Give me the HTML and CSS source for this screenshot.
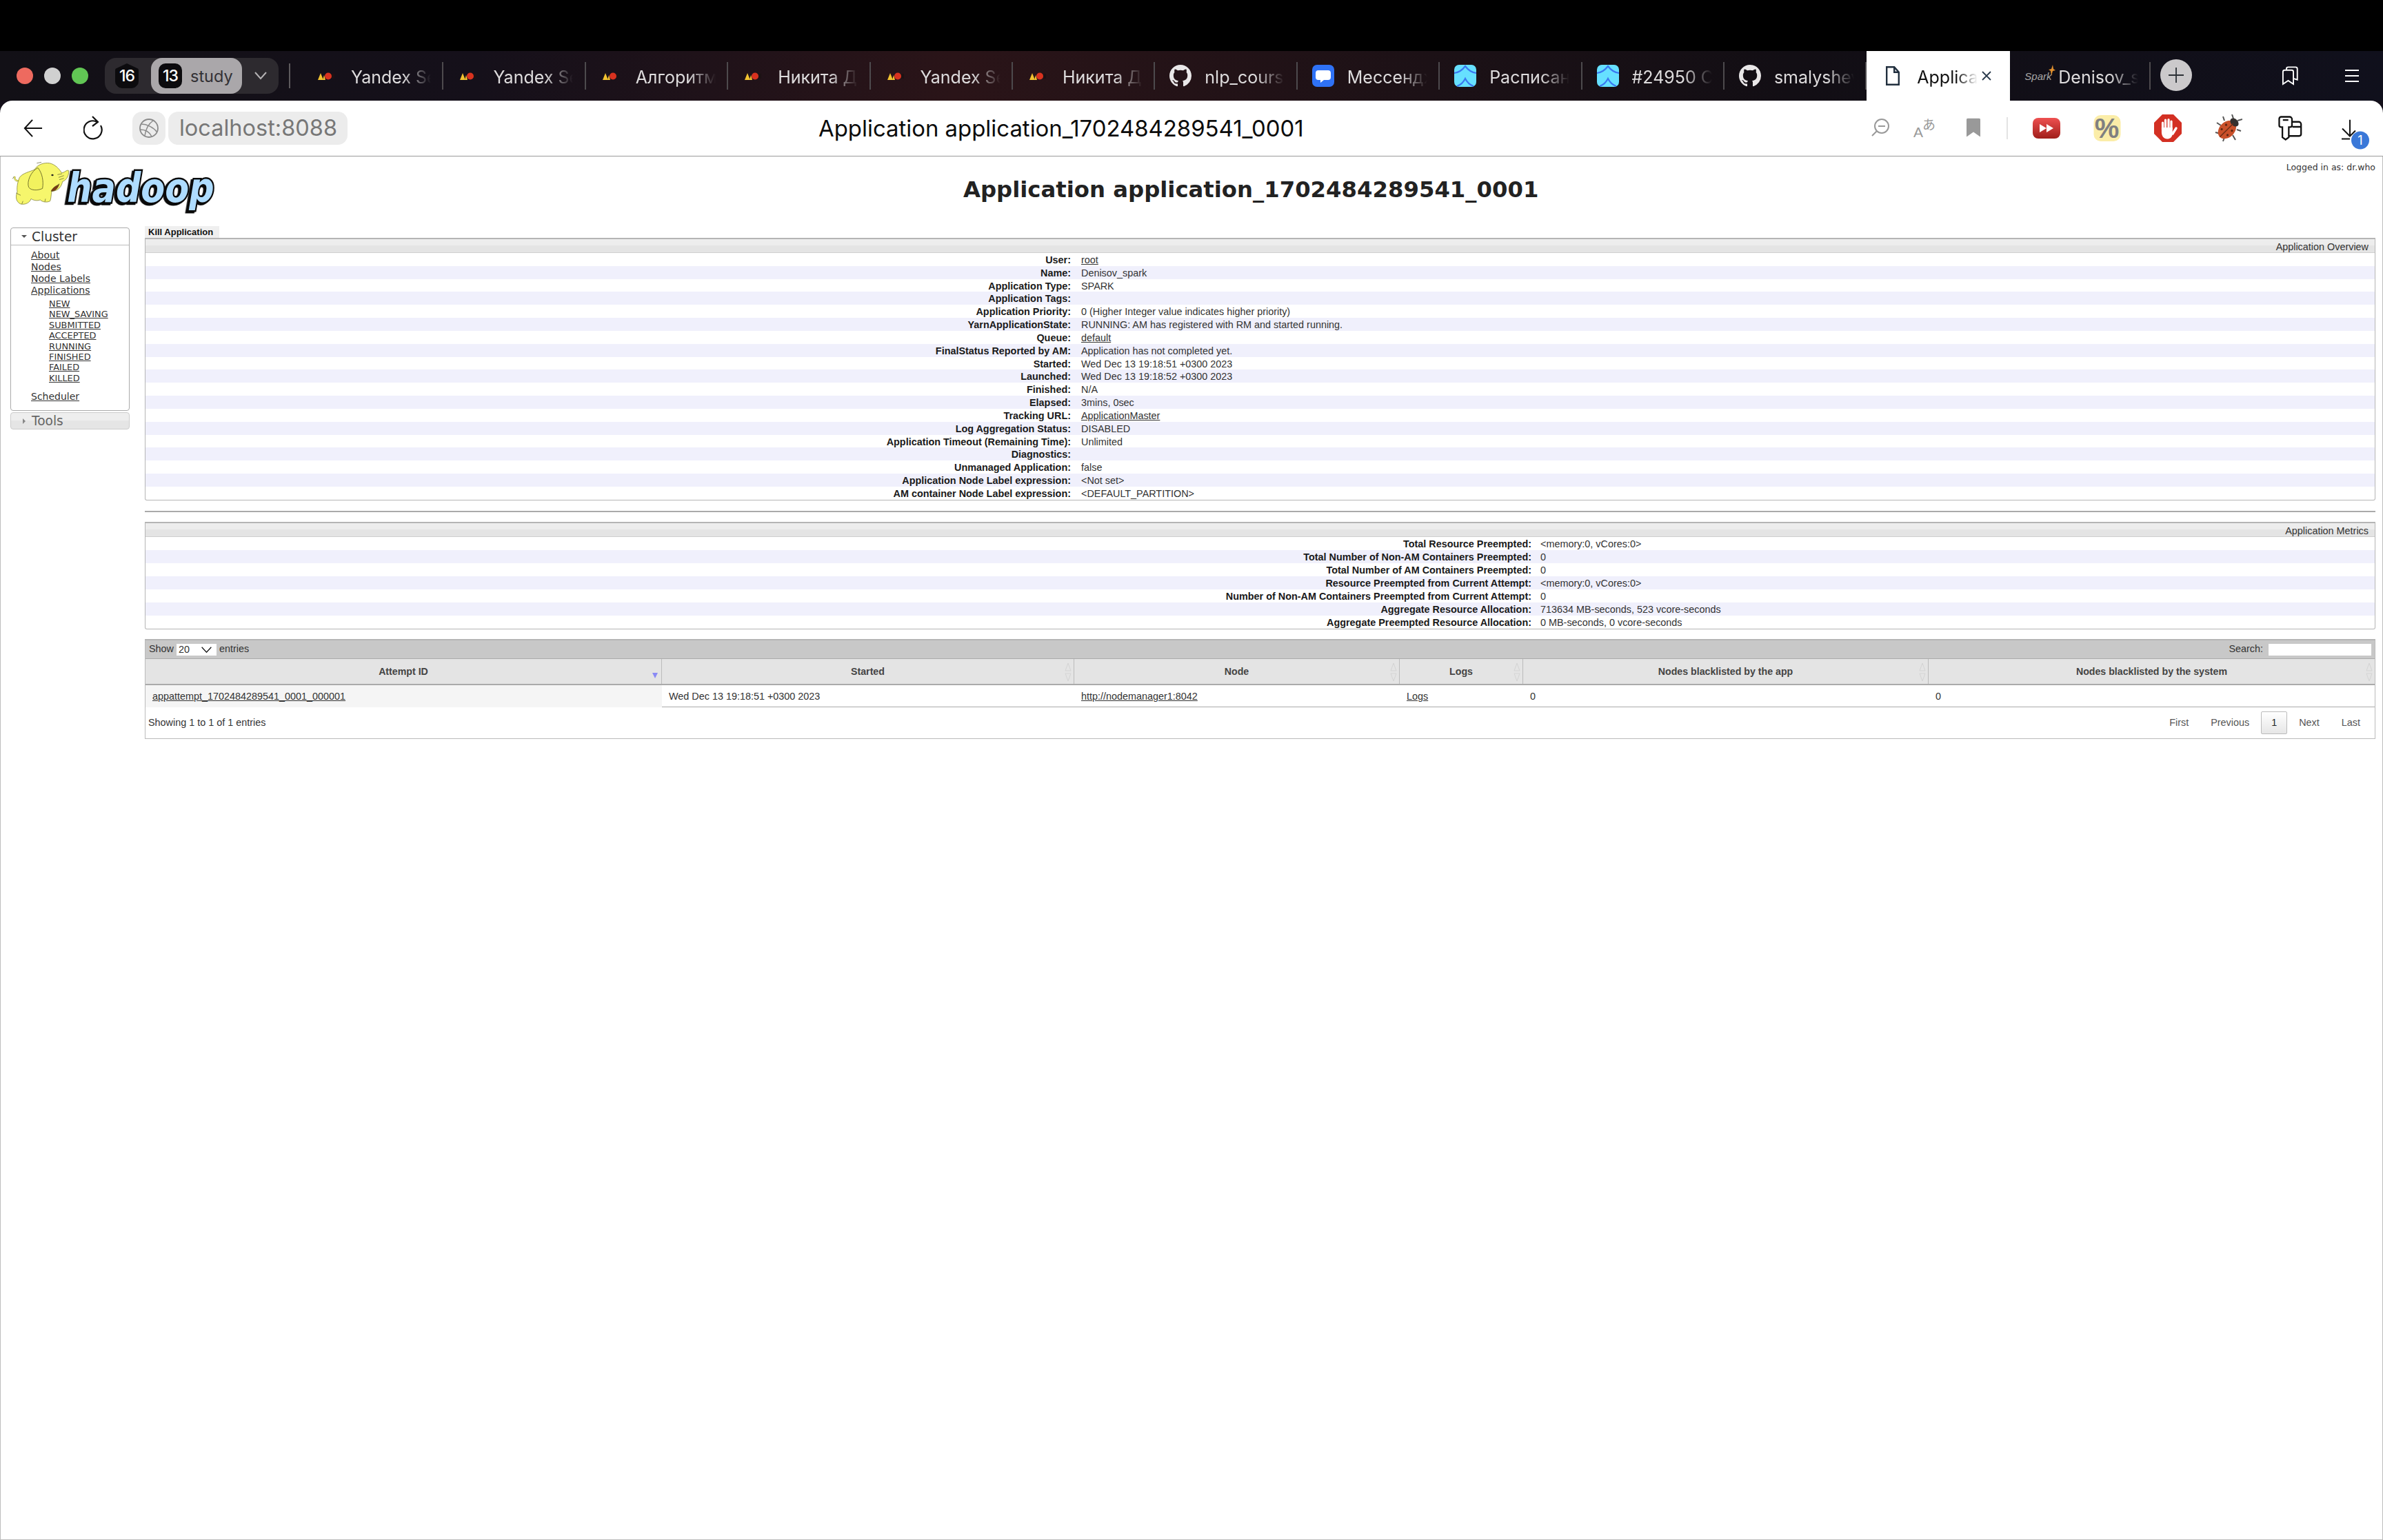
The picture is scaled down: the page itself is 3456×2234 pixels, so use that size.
FILE: index.html
```html
<!DOCTYPE html>
<html lang="en">
<head>
<meta charset="utf-8">
<title>Application application_1702484289541_0001</title>
<link rel="stylesheet" href="styles.css">
</head>
<body>
<svg class="defs" width="0" height="0" aria-hidden="true">
  <defs>
    <symbol id="ya" viewBox="0 0 26 11">
      <path d="M1 11 L5 1 L9 11Z" fill="#f2c230"/>
      <path d="M8 11 L10 4 L12 11Z" fill="#f2c230"/>
      <circle cx="16" cy="5.500" r="5" fill="#d8321f"/>
      <rect x="21" y="2" width="4" height="7" fill="#1c1214"/>
    </symbol>
    <symbol id="gh" viewBox="0 0 16 16">
      <path fill="#e9e7e8" d="M8 0C3.58 0 0 3.58 0 8c0 3.54 2.29 6.53 5.47 7.59.4.07.55-.17.55-.38 0-.19-.01-.82-.01-1.49-2.01.37-2.53-.49-2.69-.94-.09-.23-.48-.94-.82-1.13-.28-.15-.68-.52-.01-.53.63-.01 1.08.58 1.23.82.72 1.21 1.87.87 2.33.66.07-.52.28-.87.51-1.07-1.78-.2-3.64-.89-3.64-3.95 0-.87.31-1.59.82-2.15-.08-.2-.36-1.02.08-2.12 0 0 .67-.21 2.2.82.64-.18 1.32-.27 2-.27s1.36.09 2 .27c1.53-1.04 2.2-.82 2.2-.82.44 1.1.16 1.92.08 2.12.51.56.82 1.27.82 2.15 0 3.07-1.87 3.75-3.65 3.95.29.25.54.73.54 1.48 0 1.07-.01 1.93-.01 2.2 0 .21.15.46.55.38A8.01 8.01 0 0 0 16 8c0-4.42-3.58-8-8-8z"/>
    </symbol>
    <symbol id="trk" viewBox="0 0 32 32">
      <rect width="32" height="32" rx="7" fill="#66e0ff"/>
      <path d="M0 12 C8 11 13 6 16 2 C19 6 24 11 32 12" fill="none" stroke="#3a78f0" stroke-width="2.200"/>
      <path d="M4 31 C10 29 14 24 16 20 C18 24 22 29 28 31" fill="none" stroke="#3a78f0" stroke-width="2.200"/>
    </symbol>
    <symbol id="sort" viewBox="0 0 10 28">
      <path d="M5 1 L9 12 H1Z M5 27 L9 16 H1Z" fill="none" stroke="#d4d4d4" stroke-width="1"/>
    </symbol>
  </defs>
</svg>

<div class="topbar"></div>

<header class="tabbar">
  <div class="lights">
    <span class="light light-red"></span>
    <span class="light light-gray"></span>
    <span class="light light-green"></span>
  </div>
  <div class="group">
    <span class="badge badge-hex">16</span>
    <span class="study"><span class="badge">13</span><span class="study-name">study</span></span>
    <svg class="chev" viewBox="0 0 18 12"><path d="M1 1 L9 10 L17 1" fill="none" stroke="#b5b3b5" stroke-width="2"/></svg>
  </div>
  <span class="first-sep"></span>
  <div class="tabs">
    <div class="tab"><span class="fav"><svg class="ya"><use href="#ya"/></svg></span><span class="tab-text">Yandex Search</span></div>
    <div class="tab"><span class="fav"><svg class="ya"><use href="#ya"/></svg></span><span class="tab-text">Yandex Search</span></div>
    <div class="tab"><span class="fav"><svg class="ya"><use href="#ya"/></svg></span><span class="tab-text">Алгоритмы</span></div>
    <div class="tab"><span class="fav"><svg class="ya"><use href="#ya"/></svg></span><span class="tab-text">Никита Денисов</span></div>
    <div class="tab"><span class="fav"><svg class="ya"><use href="#ya"/></svg></span><span class="tab-text">Yandex Search</span></div>
    <div class="tab"><span class="fav"><svg class="ya"><use href="#ya"/></svg></span><span class="tab-text">Никита Денисов</span></div>
    <div class="tab"><span class="fav"><svg class="ico32"><use href="#gh"/></svg></span><span class="tab-text">nlp_course</span></div>
    <div class="tab"><span class="fav"><svg class="ico32" viewBox="0 0 32 32"><rect width="32" height="32" rx="7" fill="#2f72f6"/><path d="M9 8h14a4 4 0 0 1 4 4v6a4 4 0 0 1-4 4h-6l-5 4v-4H9a4 4 0 0 1-4-4v-6a4 4 0 0 1 4-4z" fill="#fff"/></svg></span><span class="tab-text">Мессенджер</span></div>
    <div class="tab"><span class="fav"><svg class="ico32"><use href="#trk"/></svg></span><span class="tab-text">Расписание</span></div>
    <div class="tab"><span class="fav"><svg class="ico32"><use href="#trk"/></svg></span><span class="tab-text">#24950 Contest</span></div>
    <div class="tab"><span class="fav"><svg class="ico32"><use href="#gh"/></svg></span><span class="tab-text">smalyshev</span></div>
    <div class="tab tab-active"><span class="fav"><svg class="doc" viewBox="0 0 20 28"><path d="M1.200 1.200h11l6.600 7.500v18.100H1.200z M12.200 1.200v7.500h6.600" fill="none" stroke="#22303f" stroke-width="2.400"/></svg></span><span class="tab-text">Application</span><svg class="tab-x" viewBox="0 0 14 14"><path d="M1 1 L13 13 M13 1 L1 13" stroke="#2a3a4c" stroke-width="1.800"/></svg></div>
    <div class="tab tab-spark"><span class="fav"><span class="spark">Spark<svg class="spark-star" viewBox="0 0 10 16"><path d="M6 0 L7 6 L10 8 L6 9 L4 16 L3 9 L0 7 L4 6Z" fill="#e2912f"/></svg></span></span><span class="tab-text">Denisov_spark</span></div>
  </div>
  <span class="plus"><svg viewBox="0 0 24 24"><path d="M12 1 V23 M1 12 H23" stroke="#2b3036" stroke-width="1.800"/></svg></span>
  <svg class="ic-books" viewBox="322 46 76 88"><path d="M328 128 V72 a8 8 0 0 1 8-8 H368 a8 8 0 0 1 8 8 V128 L352 112z M344 64 V58 a8 8 0 0 1 8-8 H386 a8 8 0 0 1 8 8 V108 L376 102" fill="none" stroke="#fff" stroke-width="6"/></svg>
  <span class="burger"><i></i><i></i><i></i></span>
</header>

<div class="toolbar">
  <svg class="ic-back" viewBox="0 0 30 28"><path d="M29 14 H2 M14 1 L2 14 L14 27" fill="none" stroke="#111" stroke-width="2.200"/></svg>
  <svg class="ic-reload" viewBox="0 0 30 36"><path d="M20 9 A13 13 0 1 0 25 14 M13 1 L21 9 L13 15" fill="none" stroke="#111" stroke-width="2.200"/></svg>
  <span class="globe"><svg viewBox="0 0 30 30"><circle cx="15" cy="15" r="13" fill="none" stroke="#8a8a8a" stroke-width="1.800"/><path d="M4 9 C12 9 22 14 27 21 M2.500 17 C10 17 16 21 19 27 M21 4 C14 9 10 18 9 26" fill="none" stroke="#8a8a8a" stroke-width="1.500"/></svg></span>
  <span class="url">localhost:8088</span>
  <span class="page-title">Application application_1702484289541_0001</span>
  <div class="actions">
    <svg class="act act-zoom" viewBox="0 0 26 26"><circle cx="15" cy="11" r="10" fill="none" stroke="#999" stroke-width="2"/><path d="M10 11 H20 M8 18 L1 25" fill="none" stroke="#999" stroke-width="2"/></svg>
    <span class="act act-tr"><span class="tr-a">A</span><span class="tr-j">あ</span></span>
    <svg class="act act-mark" viewBox="0 0 20 27"><path d="M2 0 H18 a2 2 0 0 1 2 2 V27 L10 20 L0 27 V2 a2 2 0 0 1 2-2z" fill="#999"/></svg>
    <span class="act-sep"></span>
    <svg class="act act-yt" viewBox="0 0 40 30"><defs><linearGradient id="ytg" x1="0" y1="0" x2="0" y2="1"><stop offset="0" stop-color="#ee5050"/><stop offset="1" stop-color="#a01e1a"/></linearGradient></defs><rect width="40" height="30" rx="8" fill="url(#ytg)"/><path d="M10 9 L20 15 L10 21z M20 9 L30 15 L20 21z" fill="#fff"/></svg>
    <span class="act act-pct">%</span>
    <svg class="act act-stop" viewBox="0 0 40 40"><path d="M12 0 H28 L40 12 V28 L28 40 H12 L0 28 V12z" fill="#d33023"/><path d="M12.500 22 V12 M16.500 20 V8 M21 20 V7.500 M25 21 V10" stroke="#fff" stroke-width="3.200" stroke-linecap="round"/><path d="M27 28 L32 20" stroke="#fff" stroke-width="3.400" stroke-linecap="round"/><path d="M10.900 19 H26.700 V27 C27 33 23 35.500 19 35.500 C14 35.500 10.900 31 10.900 26z" fill="#fff"/></svg>
    <svg class="act act-bug" viewBox="0 0 40 40"><g stroke="#555" stroke-width="2" fill="none"><path d="M27 6 L25 0 M33 9 L40 7 M9 16 L3 12 M14 9 L12 3 M32 22 L38 24 M26 30 L30 37 M8 28 L1 26 M14 33 L12 39"/></g><g transform="rotate(45 20 20)"><ellipse cx="20" cy="23" rx="11" ry="15" fill="#c9502a"/><ellipse cx="20" cy="8" rx="7" ry="5" fill="#34302e"/><path d="M20 10 V38" stroke="#6a2c16" stroke-width="1.400"/><circle cx="14" cy="19" r="1.600" fill="#5c2614"/><circle cx="26" cy="19" r="1.600" fill="#5c2614"/><circle cx="14" cy="28" r="1.600" fill="#5c2614"/><circle cx="26" cy="28" r="1.600" fill="#5c2614"/></g></svg>
    <svg class="act act-ext" viewBox="305 262 112 112"><path d="M322 268 H360 a10 10 0 0 1 10 10 V305 a8 8 0 0 1-8 8 H356 V358 L342 368 L328 358 V313 H322 a8 8 0 0 1 -8 -8 V278 a10 10 0 0 1 8 -10z M330 282 H354 M372 290 H400 a10 10 0 0 1 10 10 V344 a8 8 0 0 1 -8 8 H356 M372 312 H410" fill="none" stroke="#111" stroke-width="7"/></svg>
    <span class="act act-dl"><svg viewBox="0 0 24 30"><path d="M12 0 V24 M1 13 L12 24 L20 16 M0 28 H12" fill="none" stroke="#111" stroke-width="2"/></svg><span class="dl-badge">1</span></span>
  </div>
</div>

<main class="page">
  <div class="logged">Logged in as: dr.who</div>
  <div class="head">
    <svg class="logo" viewBox="48 45 900 212" role="img" aria-label="hadoop logo">
      <text class="logo-word" x="292" y="220" textLength="640" lengthAdjust="spacingAndGlyphs">hadoop</text>
      <path d="M85 125 C72 132 60 120 65 108" fill="none" stroke="#8a8a30" stroke-width="7"/>
      <path d="M85 125 C72 132 60 120 65 108" fill="none" stroke="#f4f46a" stroke-width="4"/>
      <path d="M85 112 C100 92 130 88 150 78 C165 55 190 47 215 50 C240 55 258 75 268 92 C280 92 290 78 298 82 C302 100 290 125 272 130 C268 150 255 172 225 172 C222 190 222 205 218 215 C205 222 185 220 175 210 C160 215 145 212 135 205 C130 222 110 232 90 228 C72 220 65 200 75 175 C72 150 78 130 85 112Z" fill="#f6f66c" stroke="#6f6f24" stroke-width="2"/>
      <path d="M165 70 C135 85 115 130 125 155 C135 170 165 170 185 160 C190 130 185 95 165 70Z" fill="#f2f25e" stroke="#5c5c22" stroke-width="2.500"/>
      <path d="M222 172 C232 152 245 150 258 140 C250 165 238 172 222 172Z" fill="#7a3a14" stroke="#3a3a18" stroke-width="1.500"/>
      <ellipse cx="228" cy="102" rx="5" ry="3.500" fill="#222"/>
      <path d="M250 100 L270 96 M255 112 L278 104 M258 122 L278 116 M160 50 L180 46 M54 118 L62 108 M70 180 L90 190 M95 228 L100 215 M195 218 L198 205" fill="none" stroke="#55552a" stroke-width="2"/>
    </svg>
    <h1 class="h1">Application application_1702484289541_0001</h1>
  </div>
  <div class="columns">
    <nav class="nav">
      <div class="acc">
        <div class="acc-title"><span class="caret-down"></span>Cluster</div>
        <div class="acc-body">
          <a href="#">About</a>
          <a href="#">Nodes</a>
          <a href="#">Node Labels</a>
          <a href="#">Applications</a>
          <div class="sub">
            <a href="#">NEW</a>
            <a href="#">NEW_SAVING</a>
            <a href="#">SUBMITTED</a>
            <a href="#">ACCEPTED</a>
            <a href="#">RUNNING</a>
            <a href="#">FINISHED</a>
            <a href="#">FAILED</a>
            <a href="#">KILLED</a>
          </div>
          <a href="#" class="sched">Scheduler</a>
        </div>
      </div>
      <div class="acc-closed"><span class="caret-right"></span>Tools</div>
    </nav>
    <section class="content">
      <div class="kill">Kill Application</div>
      <div class="info info-overview">
        <div class="info-head">Application Overview</div>
        <div class="row"><b>User:</b><span><a href="#">root</a></span></div>
        <div class="row"><b>Name:</b><span>Denisov_spark</span></div>
        <div class="row"><b>Application Type:</b><span>SPARK</span></div>
        <div class="row"><b>Application Tags:</b><span></span></div>
        <div class="row"><b>Application Priority:</b><span>0 (Higher Integer value indicates higher priority)</span></div>
        <div class="row"><b>YarnApplicationState:</b><span>RUNNING: AM has registered with RM and started running.</span></div>
        <div class="row"><b>Queue:</b><span><a href="#">default</a></span></div>
        <div class="row"><b>FinalStatus Reported by AM:</b><span>Application has not completed yet.</span></div>
        <div class="row"><b>Started:</b><span>Wed Dec 13 19:18:51 +0300 2023</span></div>
        <div class="row"><b>Launched:</b><span>Wed Dec 13 19:18:52 +0300 2023</span></div>
        <div class="row"><b>Finished:</b><span>N/A</span></div>
        <div class="row"><b>Elapsed:</b><span>3mins, 0sec</span></div>
        <div class="row"><b>Tracking URL:</b><span><a href="#">ApplicationMaster</a></span></div>
        <div class="row"><b>Log Aggregation Status:</b><span>DISABLED</span></div>
        <div class="row"><b>Application Timeout (Remaining Time):</b><span>Unlimited</span></div>
        <div class="row"><b>Diagnostics:</b><span></span></div>
        <div class="row"><b>Unmanaged Application:</b><span>false</span></div>
        <div class="row"><b>Application Node Label expression:</b><span>&lt;Not set&gt;</span></div>
        <div class="row"><b>AM container Node Label expression:</b><span>&lt;DEFAULT_PARTITION&gt;</span></div>
      </div>
      <hr class="rule">
      <div class="info info-metrics">
        <div class="info-head">Application Metrics</div>
        <div class="row"><b>Total Resource Preempted:</b><span>&lt;memory:0, vCores:0&gt;</span></div>
        <div class="row"><b>Total Number of Non-AM Containers Preempted:</b><span>0</span></div>
        <div class="row"><b>Total Number of AM Containers Preempted:</b><span>0</span></div>
        <div class="row"><b>Resource Preempted from Current Attempt:</b><span>&lt;memory:0, vCores:0&gt;</span></div>
        <div class="row"><b>Number of Non-AM Containers Preempted from Current Attempt:</b><span>0</span></div>
        <div class="row"><b>Aggregate Resource Allocation:</b><span>713634 MB-seconds, 523 vcore-seconds</span></div>
        <div class="row"><b>Aggregate Preempted Resource Allocation:</b><span>0 MB-seconds, 0 vcore-seconds</span></div>
      </div>
      <div class="dt">
        <div class="dt-tools">
          <span class="dt-len">Show <span class="sel">20<svg viewBox="0 0 24 14"><path d="M1 1 L12 13 L23 1" fill="none" stroke="#111" stroke-width="2"/></svg></span> entries</span>
          <span class="dt-search">Search:<span class="search-box"></span></span>
        </div>
        <div class="dt-grid dt-header">
          <div class="th">Attempt ID<span class="sort-on"></span></div>
          <div class="th">Started<svg class="sort"><use href="#sort"/></svg></div>
          <div class="th">Node<svg class="sort"><use href="#sort"/></svg></div>
          <div class="th">Logs<svg class="sort"><use href="#sort"/></svg></div>
          <div class="th">Nodes blacklisted by the app<svg class="sort"><use href="#sort"/></svg></div>
          <div class="th">Nodes blacklisted by the system<svg class="sort"><use href="#sort"/></svg></div>
        </div>
        <div class="dt-grid dt-body">
          <div class="td td-sorted"><a href="#">appattempt_1702484289541_0001_000001</a></div>
          <div class="td">Wed Dec 13 19:18:51 +0300 2023</div>
          <div class="td"><a href="#">http://nodemanager1:8042</a></div>
          <div class="td"><a href="#">Logs</a></div>
          <div class="td">0</div>
          <div class="td">0</div>
        </div>
        <div class="dt-foot">
          <span>Showing 1 to 1 of 1 entries</span>
          <span class="pager"><span>First</span><span>Previous</span><span class="page-cur">1</span><span>Next</span><span>Last</span></span>
        </div>
      </div>
    </section>
  </div>
</main>
</body>
</html>
```
FILE: styles.css
```css
* { box-sizing: border-box; }
html, body { margin: 0; padding: 0; }
body { width: 3456px; height: 2234px; overflow: hidden; background: #14101a; font-family: "Liberation Sans", Arial, sans-serif; color: #111; display: flex; flex-direction: column; }
.defs { position: absolute; }
.topbar { height: 74px; background: #000; flex: none; }

.tabbar { height: 72px; flex: none; display: flex; align-items: center; position: relative; background: linear-gradient(90deg, #121016 0%, #15101a 20%, #2a1418 40%, #1c1116 60%, #120e14 75%, #10101c 100%); color: #e8e6e7; font-family: "Inter", "Noto Sans", sans-serif; }
.lights { display: flex; gap: 16px; margin-left: 24px; width: 128px; flex: none; }
.light { width: 24px; height: 24px; border-radius: 50%; }
.light-red { background: #ee6a5f; }
.light-gray { background: #d0d0d0; }
.light-green { background: #61c554; }
.group { width: 252px; height: 52px; flex: none; background: #2d2a2f; border-radius: 16px; display: flex; align-items: center; padding-left: 15px; color: #fff; }
.badge { width: 34px; height: 36px; background: #0c0b0e; border-radius: 10px; display: flex; align-items: center; justify-content: center; font-size: 23px; font-weight: 500; color: #fff; flex: none; letter-spacing: -1px; }
.badge-hex { clip-path: polygon(50% 0, 100% 22%, 100% 82%, 82% 100%, 18% 100%, 0 82%, 0 22%); }
.study { margin-left: 18px; width: 132px; height: 52px; background: #aaa7aa; border-radius: 16px; display: flex; align-items: center; padding-left: 11px; }
.study-name { margin-left: 12px; color: #333135; font-size: 23.500px; }
.chev { width: 18px; height: 12px; margin-left: 18px; }
.first-sep { width: 2px; height: 36px; background: #5d5a5d; margin-left: 15px; flex: none; }
.tabs { display: flex; margin-left: 16px; height: 72px; flex: none; }
.tab { width: 206.400px; height: 72px; flex: none; display: flex; align-items: center; position: relative; padding-left: 20px; overflow: hidden; }
.tab::after { content: ""; position: absolute; right: 0; top: 16px; height: 40px; width: 2px; background: #4d4a4d; }
.tab-active::after { display: none; }
.tab-active { background: #fff; color: #111; width: 208px; padding-left: 28px; }
.tab-spark { width: 204px; }
.fav { width: 52px; flex: none; display: flex; align-items: center; }
.ya { width: 26px; height: 11px; margin-left: 3px; }
.ico32 { width: 32px; height: 32px; margin-left: 1px; }
.doc { width: 20px; height: 28px; }
.tab-text { font-size: 25px; line-height: 32px; margin-top: 4px; white-space: nowrap; width: 116px; overflow: hidden; color: #dedcdd; -webkit-mask-image: linear-gradient(90deg, #000 65%, transparent 100%); mask-image: linear-gradient(90deg, #000 65%, transparent 100%); }
.tab-active .fav { width: 45px; }
.tab-active .tab-text { color: #111; width: 88px; }
.tab-x { width: 14px; height: 14px; flex: none; margin-left: 6px; }
.spark { position: relative; font-family: "Liberation Sans", sans-serif; font-size: 15px; color: #a8a6a6; font-style: italic; margin-left: 1px; }
.spark-star { position: absolute; width: 10px; height: 18px; right: -6px; top: -9px; }
.tab-spark .fav { width: 50px; }
.plus { width: 46px; height: 46px; border-radius: 50%; background: #cbc9cb; margin-left: 14px; margin-top: -2px; flex: none; display: flex; align-items: center; justify-content: center; }
.plus svg { width: 24px; height: 24px; }
.ic-books { width: 24px; height: 28px; margin-left: 130px; flex: none; }
.burger { margin-left: 68px; width: 20px; display: flex; flex-direction: column; gap: 6px; flex: none; }
.burger i { display: block; height: 2px; background: #fff; }

.toolbar { height: 81px; flex: none; display: flex; align-items: center; position: relative; background: #fff; border-bottom: 1px solid #9a9a9a; border-radius: 18px 18px 0 0; }
.ic-back { width: 28px; height: 28px; margin-left: 34px; flex: none; }
.ic-reload { width: 30px; height: 36px; margin-left: 59px; flex: none; }
.globe { width: 48px; height: 48px; margin-left: 41px; background: #ececec; border-radius: 14px; display: flex; align-items: center; justify-content: center; flex: none; }
.globe svg { width: 30px; height: 30px; }
.url { margin-left: 4px; width: 260px; height: 48px; background: #ececec; border-radius: 14px; color: #777; font-size: 32.500px; font-family: "Inter", sans-serif; line-height: 48px; padding-left: 16px; flex: none; white-space: nowrap; }
.page-title { margin-left: 683px; font-family: "Inter", sans-serif; font-size: 32.900px; color: #0c0c0c; white-space: nowrap; flex: none; }
.actions { position: absolute; inset: 0; pointer-events: none; }
.act { position: absolute; top: 39px; transform: translate(-50%, -50%); display: block; }
.act-zoom { left: 2727px; width: 26px; height: 26px; }
.act-tr { left: 2791px; width: 32px; height: 27px; color: #999; }
.tr-a { position: absolute; left: 0; bottom: -5px; font-size: 21px; line-height: 24px; font-family: "Liberation Sans", sans-serif; }
.tr-j { position: absolute; right: 0; top: -4px; font-size: 19px; line-height: 24px; font-family: "Noto Sans CJK JP", sans-serif; }
.act-mark { left: 2862px; width: 20px; height: 27px; }
.act-sep { position: absolute; left: 2910px; top: 24px; width: 2px; height: 32px; background: #e3e3e3; }
.act-yt { left: 2968px; width: 40px; height: 30px; top: 40px; }
.act-pct { left: 3055.500px; width: 39px; height: 38px; top: 40px; background: #fbeda8; border-radius: 10px; color: #808080; font-family: "Liberation Sans", sans-serif; font-weight: 700; font-size: 40px; line-height: 38px; display: flex; align-items: center; justify-content: center; overflow: hidden; }
.act-stop { left: 3144px; width: 40px; height: 40px; top: 40px; }
.act-bug { left: 3232px; width: 40px; height: 40px; top: 39.500px; filter: blur(0.5px); }
.act-ext { left: 3321px; width: 37px; height: 37px; top: 39.500px; }
.act-dl { left: 3416px; top: 47.500px; width: 40px; height: 41px; }
.act-dl svg { position: absolute; left: 0; top: 0; width: 24px; height: 30px; }
.dl-badge { position: absolute; left: 14px; top: 17px; width: 26px; height: 26px; border-radius: 50%; background: #3a78d8; color: #fff; font-size: 18px; font-family: "Inter", sans-serif; display: flex; align-items: center; justify-content: center; }

.page { flex: 1; position: relative; background: #fff; border-left: 1px solid #bdbdbd; border-right: 1px solid #bdbdbd; border-bottom: 1px solid #bdbdbd; padding: 0 10px 0 14px; }
.logged { position: absolute; right: 10px; top: 8px; font-family: "DejaVu Sans", sans-serif; font-size: 12.500px; color: #333; }
.head { height: 103px; display: flex; align-items: flex-start; position: relative; }
.logo { width: 300px; height: 70.700px; margin-top: 8px; margin-left: 1px; flex: none; overflow: visible; }
.logo-word { font-family: "DejaVu Sans", sans-serif; font-weight: 700; font-style: italic; font-size: 178px; fill: #aedcff; stroke: #0a0a0a; stroke-width: 15; stroke-linejoin: miter; paint-order: stroke; filter: drop-shadow(-8px 6px 0 #0a0a0a); }
.h1 { margin: 0; position: absolute; left: 1382px; top: 28px; font-family: "DejaVu Sans", sans-serif; font-size: 32.300px; font-weight: 700; line-height: 40px; color: #222; white-space: nowrap; }
.columns { display: flex; align-items: flex-start; }
.nav { width: 173px; flex: none; }
.acc { border: 1px solid #aaa; border-radius: 4px; }
.acc-title { height: 25px; border-bottom: 1px solid #bbb; font-family: "DejaVu Sans", sans-serif; font-size: 18.600px; color: #333; line-height: 25px; padding-left: 30px; position: relative; }
.caret-down { position: absolute; left: 15px; top: 10px; border: 4px solid transparent; border-top: 4px solid #555; }
.caret-right { position: absolute; left: 17px; top: 8px; border: 4px solid transparent; border-left: 4px solid #888; }
.acc-body { padding: 6px 0 6px 29px; height: 239px; font-family: "DejaVu Sans", sans-serif; font-size: 14px; line-height: 17px; }
.acc-body a { display: block; color: #333; width: max-content; }
.sub { padding: 3px 0 0 26px; margin-bottom: 11px; }
.sub a { font-size: 12.900px; line-height: 15.400px; }
.acc-closed { margin-top: 2px; height: 25px; border: 1px solid #ccc; border-radius: 4px; background: linear-gradient(#eee 50%, #e5e5e5 50%); font-family: "DejaVu Sans", sans-serif; font-size: 18.600px; color: #666; line-height: 24px; padding-left: 30px; position: relative; }
.content { width: 3235px; margin-left: 22px; margin-top: -2px; flex: none; }
.kill { width: 108px; height: 17px; background: #efefef; font-weight: 700; font-size: 13px; line-height: 17px; padding-left: 5px; white-space: nowrap; color: #111; }
.info { border: 1px solid #b5b5b5; border-top-width: 2px; border-radius: 0 0 3px 3px; }
.info-head { height: 20px; background: linear-gradient(#ededed 50%, #e4e4e4 50%); border-bottom: 1px solid #cfcfcf; font-size: 14.400px; line-height: 22px; text-align: right; padding-right: 9px; color: #333; }
.row { display: flex; font-size: 14.400px; line-height: 21px; height: 18.840px; white-space: nowrap; color: #333; }
.row:nth-child(odd) { background: #f0f0fc; }
.row b { text-align: right; color: #1a1a1a; }
.row a { color: #333; }
.info-overview .row b { width: 1342px; }
.info-overview .row span { margin-left: 15px; }
.info-metrics .row b { width: 2010px; }
.info-metrics .row span { margin-left: 13px; }
.info-metrics .row { height: 19px; }
.rule { margin: 15px 0 14px; height: 2px; border: 0; background: #aaa; }
.dt { margin-top: 14px; border: 1px solid #bbb; border-top: 2px solid #b5b5b5; }
.dt-tools { height: 27px; background: #c8c8c8; display: flex; align-items: center; justify-content: space-between; padding: 0 5px; font-size: 14.400px; color: #333; border-bottom: 1px solid #aaa; }
.sel { display: inline-flex; align-items: center; vertical-align: middle; width: 58px; height: 17px; background: #fff; padding-left: 3px; }
.sel svg { width: 15px; height: 9px; margin-left: 17px; }
.search-box { display: inline-block; vertical-align: middle; width: 149px; height: 17px; background: #fff; margin-left: 8px; }
.dt-grid { display: grid; grid-template-columns: 749px 598px 472px 179px 588px 1fr; }
.dt-header { height: 38px; background: #e4e4e4; border-bottom: 2px solid #aaa; }
.th { position: relative; text-align: center; font-weight: 700; font-size: 14.200px; color: #444; line-height: 36px; border-right: 1px solid #bbb; }
.th:last-child { border-right: 0; }
.sort { position: absolute; right: 3px; top: 5px; width: 10px; height: 28px; }
.sort-on { position: absolute; right: 5px; top: 20px; border: 4px solid transparent; border-top: 8px solid #8a8af5; border-bottom: 0; }
.dt-body { height: 32px; border-bottom: 1px solid #aaa; }
.td { font-size: 14.400px; line-height: 32px; padding-left: 10px; color: #333; white-space: nowrap; }
.td a { color: #333; }
.td-sorted { background: #f5f5f5; }
.dt-foot { height: 45px; display: flex; align-items: center; justify-content: space-between; padding: 0 4px; font-size: 14.400px; color: #333; }
.pager { display: flex; align-items: center; gap: 32px; color: #555; padding-right: 17px; }
.page-cur { width: 38px; height: 33px; border: 1px solid #bbb; border-radius: 2px; background: linear-gradient(#fff, #e6e6e6); text-align: center; line-height: 31px; color: #222; margin: 0 -15px; }
```
